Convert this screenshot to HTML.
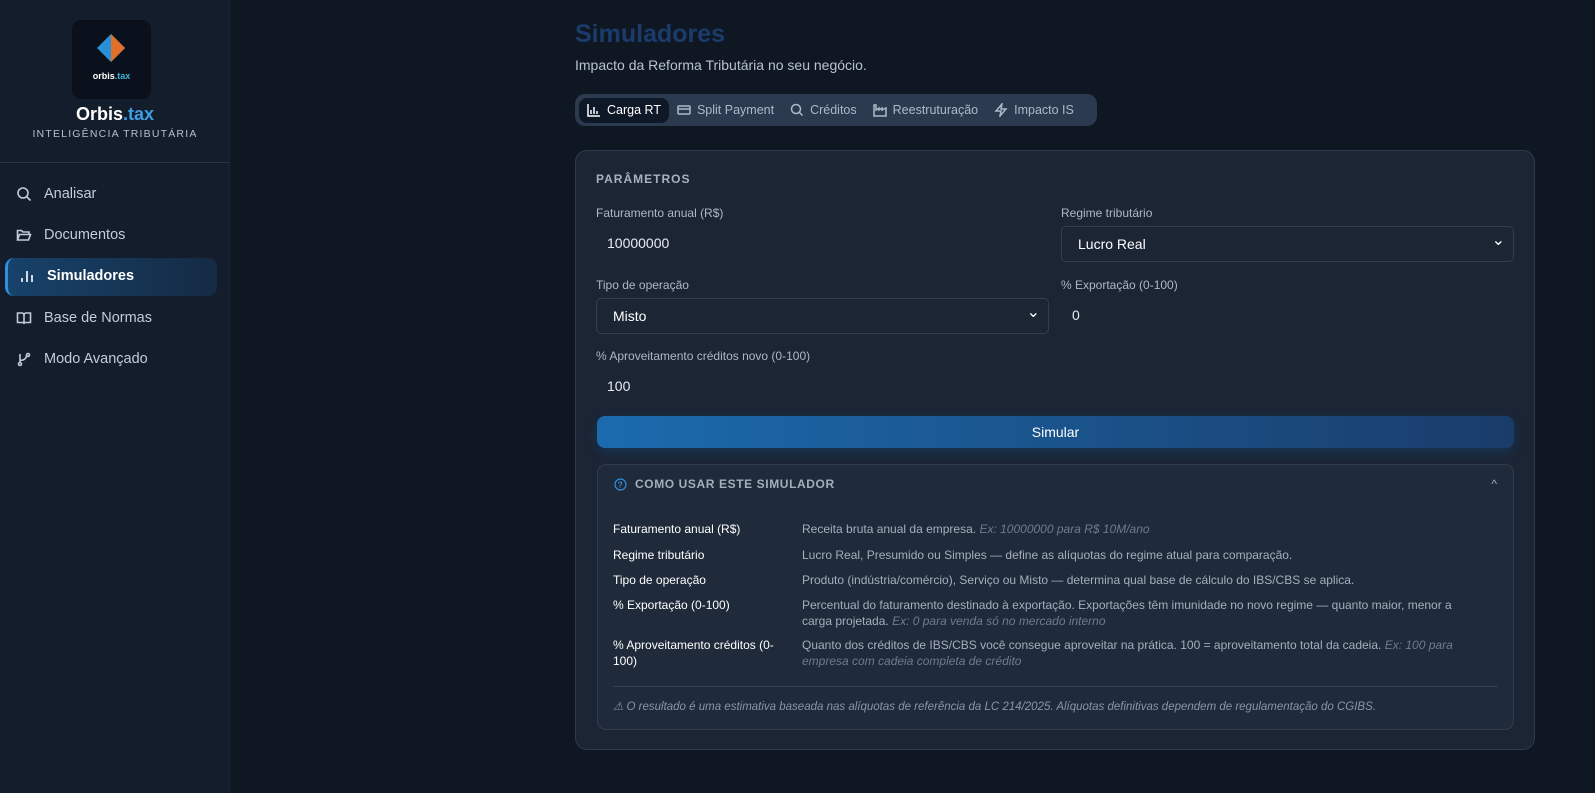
<!DOCTYPE html>
<html><head><meta charset="utf-8"><style>
*{box-sizing:border-box;margin:0;padding:0}
body{width:1595px;height:793px;background:#0f1723;font-family:"Liberation Sans",sans-serif;color:#e2e8f0;position:relative;overflow:hidden}
.sb{position:absolute;left:0;top:0;width:230px;height:793px;background:#131d2b;border-right:1px solid #1a2535}
.logo{position:absolute;left:72px;top:20px;width:79px;height:79px;border-radius:9px;background:#0a111c}
.brand{position:absolute;top:104px;width:230px;text-align:center;font-weight:bold;font-size:18px;color:#fff}
.brand span{color:#3b9ee6}
.sub{position:absolute;top:128px;width:230px;text-align:center;font-size:10.5px;letter-spacing:1.2px;color:#b6c0cc}
.hr{position:absolute;top:162px;left:0;width:230px;border-top:1px solid #283445}
.nav{position:absolute;left:16px;font-size:14.5px;color:#c3ccd8;display:flex;align-items:center;gap:12px}
.nav svg{width:16px;height:16px;stroke:#c3ccd8;fill:none;stroke-width:1.6}
.act{position:absolute;left:5px;top:258px;width:212px;height:38px;border-radius:9px;background:linear-gradient(90deg,#17426a,#152a44);border-left:3px solid #2f8fe0}
h1{position:absolute;left:575px;top:20px;font-size:25px;color:#1b3c6a;font-weight:bold}
.lead{position:absolute;left:575px;top:57px;font-size:14px;color:#b8c2cf}
.tabs{position:absolute;left:575px;top:94px;width:522px;height:32px;border-radius:10px;background:#2b3a4f;display:flex;align-items:center;padding:0 4px;font-size:12.5px;color:#aeb9c7}
.tab{display:flex;align-items:center;gap:6px;padding:0 8px;height:25px;border-radius:8px}
.tab svg{width:14px;height:14px;stroke:#aeb9c7;fill:none;stroke-width:1.5}
.tab.on{background:#0f1826;color:#fff}.tab.on svg{stroke:#fff}
.card{position:absolute;left:575px;top:150px;width:960px;height:600px;border-radius:12px;background:#1b2534;border:1px solid #2e3b4d}
.lbl{position:absolute;font-size:12px;color:#aeb8c5}
.val{position:absolute;font-size:14px;color:#e8edf3}
.sel{position:absolute;height:36px;border:1px solid #323f52;border-radius:5px;background:#1b2534;font-size:14px;color:#fff;padding:9px 16px}
.sel:after{content:"⌄";position:absolute;right:8px;top:3px;font-size:16px}
.btn{position:absolute;left:21px;top:265px;width:917px;height:32px;border-radius:8px;background:linear-gradient(90deg,#1b6bae,#1a3c6a);box-shadow:0 4px 12px rgba(20,80,150,.35);text-align:center;line-height:32px;font-size:14px;color:#fff}
.help{position:absolute;left:21px;top:313px;width:917px;height:266px;border-radius:9px;background:#1f2a3a;border:1px solid #303d50}
.row{position:absolute;left:15px;font-size:12px;display:flex;line-height:16px}
.row b{font-weight:normal;color:#fff;width:189px;padding-right:12px;flex:none}
.row span{color:#a4afbd;width:680px}
.row i{color:#6f7c8d}
</style></head><body>
<div class="sb">
<div class="logo"><svg width="79" height="79" viewBox="0 0 79 79"><polygon points="39,14 53,28 39,42 25,28" fill="#2b8fd8"/><polygon points="39,14 53,28 39,42" fill="#e0702a"/><text x="39.5" y="59" fill="#fff" font-size="9" font-weight="bold" text-anchor="middle" font-family="Liberation Sans">orbis<tspan fill="#3bb3d6">.tax</tspan></text></svg></div>
<div class="brand">Orbis<span>.tax</span></div>
<div class="sub">INTELIGÊNCIA TRIBUTÁRIA</div>
<div class="hr"></div>
<div class="nav" style="top:186px"><svg viewBox="0 0 16 16"><circle cx="7" cy="7" r="5"/><path d="M11 11l3.5 3.5"/></svg>Analisar</div>
<div class="nav" style="top:227px"><svg viewBox="0 0 16 16"><path d="M1.5 13V3.5h4l1.5 1.5h6v2M1.5 13l2-5.5h11L12.5 13z"/></svg>Documentos</div>
<div class="act"></div>
<div class="nav" style="top:268px;left:19px;color:#fff;font-weight:bold"><svg viewBox="0 0 16 16" style="stroke:#fff"><path d="M3 14V10M8 14V3M13 14V7"/></svg>Simuladores</div>
<div class="nav" style="top:310px"><svg viewBox="0 0 16 16"><path d="M1.5 3h4.5a2 2 0 012 2v9a1.5 1.5 0 00-1.5-1.5h-5zM14.5 3H10a2 2 0 00-2 2v9a1.5 1.5 0 011.5-1.5h5z"/></svg>Base de Normas</div>
<div class="nav" style="top:351px"><svg viewBox="0 0 16 16"><circle cx="4" cy="13" r="1.5"/><circle cx="12" cy="4" r="1.5"/><path d="M4 11.5V3M4 9a5 5 0 006.5-4.5"/></svg>Modo Avançado</div>
</div>
<h1>Simuladores</h1>
<div class="lead">Impacto da Reforma Tributária no seu negócio.</div>
<div class="tabs">
<div class="tab on"><svg viewBox="0 0 14 14"><path d="M1 1v12h12M4 11V7M7 11V4M10 11V8"/></svg>Carga RT</div>
<div class="tab"><svg viewBox="0 0 14 14"><rect x="1" y="3" width="12" height="8" rx="1"/><path d="M1 6h12"/></svg>Split Payment</div>
<div class="tab"><svg viewBox="0 0 14 14"><circle cx="6" cy="6" r="4.5"/><path d="M9.5 9.5l3 3"/></svg>Créditos</div>
<div class="tab"><svg viewBox="0 0 14 14"><path d="M1 13V2h2v5l3-2v2l3-2v2l4-2v8z"/></svg>Reestruturação</div>
<div class="tab"><svg viewBox="0 0 14 14"><path d="M8 1L2 8h5l-1 5 6-7H7z"/></svg>Impacto IS</div>
</div>
<div class="card">
<div class="lbl" style="left:20px;top:21px;font-weight:bold;letter-spacing:1px;color:#a7b2c0">PARÂMETROS</div>
<div class="lbl" style="left:20px;top:55px">Faturamento anual (R$)</div>
<div class="val" style="left:31px;top:84px">10000000</div>
<div class="lbl" style="left:485px;top:55px">Regime tributário</div>
<div class="sel" style="left:485px;top:75px;width:453px">Lucro Real</div>
<div class="lbl" style="left:20px;top:127px">Tipo de operação</div>
<div class="sel" style="left:20px;top:147px;width:453px">Misto</div>
<div class="lbl" style="left:485px;top:127px">% Exportação (0-100)</div>
<div class="val" style="left:496px;top:156px">0</div>
<div class="lbl" style="left:20px;top:198px">% Aproveitamento créditos novo (0-100)</div>
<div class="val" style="left:31px;top:227px">100</div>
<div class="btn">Simular</div>
<div class="help">
<div style="position:absolute;left:16px;top:12px;font-size:12px;font-weight:bold;letter-spacing:.6px;color:#a4afbd;display:flex;align-items:center;gap:8px"><svg width="13" height="13" viewBox="0 0 13 13"><circle cx="6.5" cy="6.5" r="5.5" fill="none" stroke="#2f8fe0" stroke-width="1.2"/><text x="6.5" y="9.5" font-size="8" fill="#2f8fe0" text-anchor="middle">?</text></svg>COMO USAR ESTE SIMULADOR</div>
<div style="position:absolute;right:16px;top:12px;color:#a4afbd;font-size:12px">^</div>
<div class="row" style="top:56px"><b>Faturamento anual (R$)</b><span>Receita bruta anual da empresa. <i>Ex: 10000000 para R$ 10M/ano</i></span></div>
<div class="row" style="top:82px"><b>Regime tributário</b><span>Lucro Real, Presumido ou Simples — define as alíquotas do regime atual para comparação.</span></div>
<div class="row" style="top:107px"><b>Tipo de operação</b><span>Produto (indústria/comércio), Serviço ou Misto — determina qual base de cálculo do IBS/CBS se aplica.</span></div>
<div class="row" style="top:132px"><b>% Exportação (0-100)</b><span>Percentual do faturamento destinado à exportação. Exportações têm imunidade no novo regime — quanto maior, menor a carga projetada. <i>Ex: 0 para venda só no mercado interno</i></span></div>
<div class="row" style="top:172px"><b>% Aproveitamento créditos (0-100)</b><span>Quanto dos créditos de IBS/CBS você consegue aproveitar na prática. 100 = aproveitamento total da cadeia. <i>Ex: 100 para empresa com cadeia completa de crédito</i></span></div>
<div style="position:absolute;left:15px;right:15px;top:221px;border-top:1px solid #334052"></div>
<div style="position:absolute;left:15px;top:234px;font-size:11.5px;font-style:italic;color:#8a96a6">⚠ O resultado é uma estimativa baseada nas alíquotas de referência da LC 214/2025. Alíquotas definitivas dependem de regulamentação do CGIBS.</div>
</div>
</div>
</body></html>
